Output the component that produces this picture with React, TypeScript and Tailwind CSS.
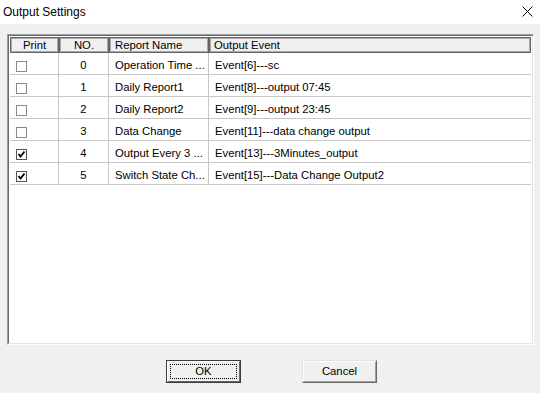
import React from 'react';

const rows = [
  { print: false, no: 0, name: 'Operation Time ...', event: 'Event[6]---sc' },
  { print: false, no: 1, name: 'Daily Report1', event: 'Event[8]---output 07:45' },
  { print: false, no: 2, name: 'Daily Report2', event: 'Event[9]---output 23:45' },
  { print: false, no: 3, name: 'Data Change', event: 'Event[11]---data change output' },
  { print: true, no: 4, name: 'Output Every 3 ...', event: 'Event[13]---3Minutes_output' },
  { print: true, no: 5, name: 'Switch State Ch...', event: 'Event[15]---Data Change Output2' },
];

function CheckBox({ checked }: { checked: boolean }) {
  return (
    <div className={`w-[11px] h-[11px] border bg-white flex items-center justify-center ${checked ? 'border-[#555555]' : 'border-[#8a8a8a]'}`}>
      {checked && (
        <svg width="9" height="9" viewBox="0 0 9 9">
          <path d="M1.5 4 L3.5 6.5 L7.5 1.5" fill="none" stroke="#000" strokeWidth="1.8" />
        </svg>
      )}
    </div>
  );
}

const headCell = 'h-full border border-[#646464] shadow-[inset_0_0_0_1px_#a8a8a8] bg-[#f0f0f0] flex items-center pt-[1px]';

export default function App() {
  return (
    <div className="w-[540px] h-[393px] bg-[#f0f0f0] flex flex-col text-black font-['Liberation_Sans',Arial,sans-serif] text-[11.3px] overflow-hidden">
      {/* title bar */}
      <div className="h-6 bg-white flex items-center justify-between pl-[3px] pr-[7px] shrink-0">
        <span className="text-[12px] font-['Segoe_UI','Liberation_Sans',sans-serif]">Output Settings</span>
        <svg width="11" height="11" viewBox="0 0 11 11" className="mb-[1px]">
          <path d="M0.5 0.5 L10.5 10.5 M10.5 0.5 L0.5 10.5" stroke="#000" strokeWidth="1" />
        </svg>
      </div>

      {/* list */}
      <div className="pt-[10px] pl-[7px]">
        <div className="w-[527px] h-[311px] border border-t-[#a0a0a0] border-l-[#a0a0a0] border-r-white border-b-white">
          <div className="w-full h-full border border-t-[#696969] border-l-[#696969] border-r-[#e3e3e3] border-b-[#e3e3e3] bg-white pt-[1px] pl-[1px]">
            <div className="flex h-[16px] w-[521px]">
              <div className={`${headCell} w-[49px] justify-center`}>Print</div>
              <div className={`${headCell} w-[50px] justify-center`}>NO.</div>
              <div className={`${headCell} w-[100px] pl-[5px]`}>Report Name</div>
              <div className={`${headCell} w-[322px] pl-[4px]`}>Output Event</div>
            </div>
            {rows.map(r => (
              <div key={r.no} className="flex h-[22px] w-[521px] border-b border-[#c8c8c8]">
                <div className="w-[49px] border-r border-[#c8c8c8] pl-[6px] flex items-end pb-[2px]">
                  <CheckBox checked={r.print} />
                </div>
                <div className="w-[50px] border-r border-[#c8c8c8] flex items-center justify-center pt-[3px]">{r.no}</div>
                <div className="w-[100px] border-r border-[#c8c8c8] flex items-center pl-[6px] pt-[3px] whitespace-nowrap">{r.name}</div>
                <div className="flex-1 flex items-center pl-[6px] pt-[3px] whitespace-nowrap">{r.event}</div>
              </div>
            ))}
          </div>
        </div>
      </div>

      {/* buttons */}
      <div className="flex mt-[15px] pl-[166px] gap-[61px]">
        <button className="w-[75px] h-[23px] border border-[#3c3c3c] p-0">
          <div className="w-full h-full border border-t-white border-l-white border-r-[#696969] border-b-[#696969] bg-[#f0f0f0] p-[2px]">
            <div className="w-full h-full border border-dotted border-black flex items-center justify-center">OK</div>
          </div>
        </button>
        <button className="w-[75px] h-[23px] border border-t-[#e3e3e3] border-l-[#e3e3e3] border-r-[#696969] border-b-[#696969] p-0">
          <div className="w-full h-full border border-t-white border-l-white border-r-[#a0a0a0] border-b-[#a0a0a0] bg-[#f0f0f0] flex items-center justify-center">
            Cancel
          </div>
        </button>
      </div>
    </div>
  );
}
